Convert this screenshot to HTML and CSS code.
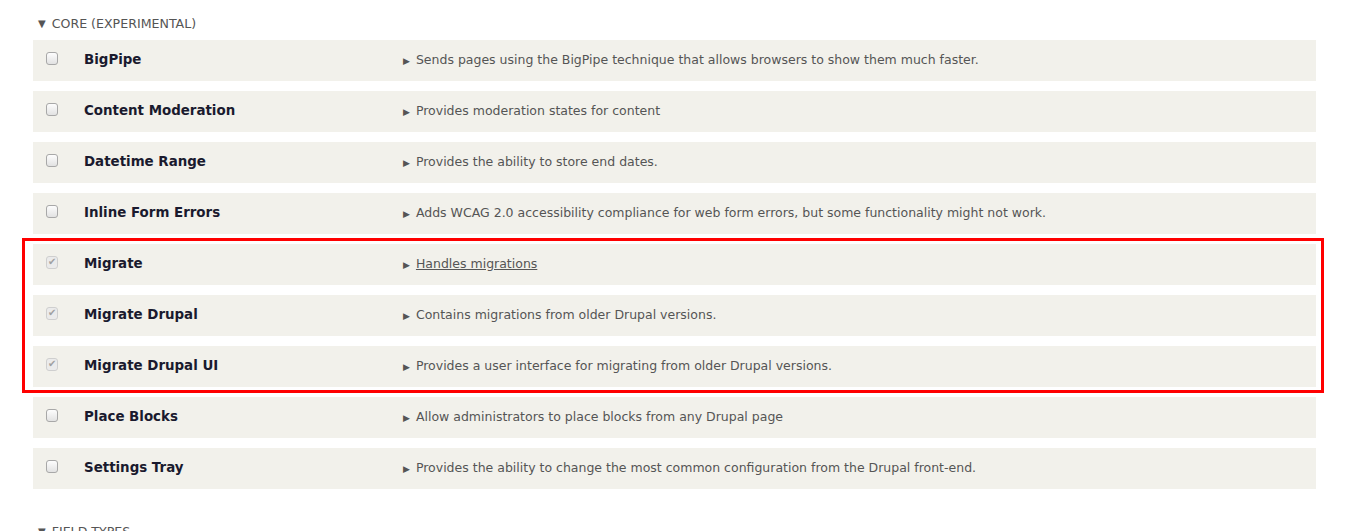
FILE: index.html
```html
<!DOCTYPE html>
<html>
<head>
    <title>Extend</title>
    <meta charset="UTF-8">
    <link rel="stylesheet" href="styles.css">
</head>
<body>
    <div class="package">
        <div class="package-title"><span class="caret">▼</span>Core (Experimental)</div>

        <div class="module">
            <span class="check"></span>
            <span class="name">BigPipe</span>
            <span class="desc"><span class="arrow">▶</span>Sends pages using the BigPipe technique that allows browsers to show them much faster.</span>
        </div>
        <div class="module">
            <span class="check"></span>
            <span class="name">Content Moderation</span>
            <span class="desc"><span class="arrow">▶</span>Provides moderation states for content</span>
        </div>
        <div class="module">
            <span class="check"></span>
            <span class="name">Datetime Range</span>
            <span class="desc"><span class="arrow">▶</span>Provides the ability to store end dates.</span>
        </div>
        <div class="module">
            <span class="check"></span>
            <span class="name">Inline Form Errors</span>
            <span class="desc"><span class="arrow">▶</span>Adds WCAG 2.0 accessibility compliance for web form errors, but some functionality might not work.</span>
        </div>

        <!-- highlighted group -->
        <div class="highlight">
            <div class="module">
                <span class="check checked"></span>
                <span class="name">Migrate</span>
                <span class="desc"><span class="arrow">▶</span><a href="#">Handles migrations</a></span>
            </div>
            <div class="module">
                <span class="check checked"></span>
                <span class="name">Migrate Drupal</span>
                <span class="desc"><span class="arrow">▶</span>Contains migrations from older Drupal versions.</span>
            </div>
            <div class="module">
                <span class="check checked"></span>
                <span class="name">Migrate Drupal UI</span>
                <span class="desc"><span class="arrow">▶</span>Provides a user interface for migrating from older Drupal versions.</span>
            </div>
        </div>

        <div class="module">
            <span class="check"></span>
            <span class="name">Place Blocks</span>
            <span class="desc"><span class="arrow">▶</span>Allow administrators to place blocks from any Drupal page</span>
        </div>
        <div class="module">
            <span class="check"></span>
            <span class="name">Settings Tray</span>
            <span class="desc"><span class="arrow">▶</span>Provides the ability to change the most common configuration from the Drupal front-end.</span>
        </div>
    </div>

    <div class="package">
        <div class="package-title next"><span class="caret">▼</span>Field types</div>
    </div>
</body>
</html>
```

FILE: styles.css
```css
body {
    margin: 0;
    background: #fff;
    font-family: "DejaVu Sans", Verdana, sans-serif;
    color: #333;
    overflow: hidden;
}
.package {
    padding: 0 32px 0 33px;
}
.package-title {
    display: flex;
    align-items: center;
    height: 24px;
    margin: 11px 0 5px;
    font-size: 12.6px;
    text-transform: uppercase;
    color: #555;
}
.package-title.next {
    margin-top: 30px;
}
.caret {
    font-size: 10px;
    margin: 0 6px 0 5px;
    color: #555;
}
.module {
    display: grid;
    grid-template-columns: 51px 319px 1fr;
    align-items: center;
    height: 41px;
    padding-bottom: 2px;
    box-sizing: border-box;
    margin-bottom: 10px;
    background: #f2f1eb;
}
.check {
    justify-self: start;
    margin: 0 0 3px 13px;
    width: 10px;
    height: 11px;
    border: 1px solid #a8a8a8;
    border-radius: 3px;
    background: linear-gradient(#fdfdfd, #e2e2e2);
    position: relative;
}
.check.checked {
    border-color: #cfcfcf;
    background: #ebebeb;
}
.check.checked::after {
    content: "✔";
    position: absolute;
    left: 1px;
    top: -1px;
    font-size: 10px;
    color: #a0a0a0;
}
.name {
    font-size: 13.4px;
    font-weight: bold;
    color: #1a1a2e;
}
.desc {
    font-size: 12.5px;
    color: #555;
}
.arrow {
    font-size: 9px;
    margin-right: 6px;
    color: #555;
}
.desc a {
    color: #555;
}
.highlight {
    position: relative;
}
.highlight::after {
    content: "";
    position: absolute;
    top: -6px;
    left: -11px;
    right: -8px;
    bottom: -6px;
    border: 3px solid #f00;
    pointer-events: none;
}
```
